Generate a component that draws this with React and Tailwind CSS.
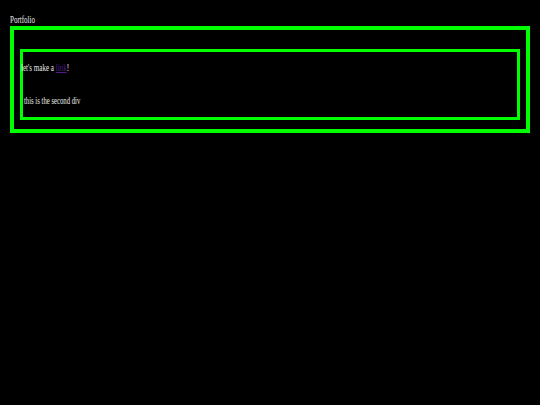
export default function App() {
  return (
    <div className="bg-black w-full min-h-screen pl-[10px] pt-[13px] text-[11px] leading-[12px] text-[#e8e8e8]" style={{ fontFamily: '"Liberation Serif", "Times New Roman", serif' }}>

      <p className="mb-[1px] scale-x-[0.64] origin-left">Portfolio</p>

      {/* outer box */}

      <div className="w-[520px] h-[107px] border-4 border-[#0f0] pt-[19px] pl-[6px]">

        {/* inner box */}

        <div className="w-[500px] h-[71px] border-[3px] border-[#0f0]">

          <p className="mt-[9px] ml-[-2px] scale-x-[0.64] origin-left">
            let's make a <a href="#" className="text-[#551a8b] underline">link</a>!
          </p>

          <p className="mt-[21px] ml-[1px] scale-x-[0.61] origin-left">
            this is the second div
          </p>

        </div>

      </div>

    </div>
  )
}
